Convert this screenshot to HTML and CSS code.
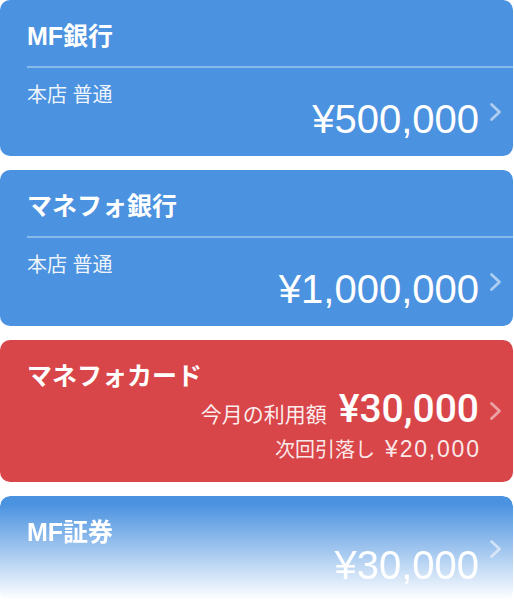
FILE: index.html
```html
<!DOCTYPE html>
<html lang="ja">
<head>
<meta charset="utf-8">
<title>口座一覧</title>
<link rel="stylesheet" href="styles.css">
</head>
<body>
<div class="list">
  <div class="card bank">
    <div class="head"><span class="title">MF銀行</span></div>
    <div class="body">
      <div class="sub">本店 普通</div>
      <div class="amount-row">
        <span class="amount">¥500,000</span>
        <svg class="chev" viewBox="0 0 13 20" width="13" height="20"><path d="M2.5 2.5 L10.5 10 L2.5 17.5"/></svg>
      </div>
    </div>
  </div>

  <div class="card bank">
    <div class="head"><span class="title">マネフォ銀行</span></div>
    <div class="body">
      <div class="sub">本店 普通</div>
      <div class="amount-row">
        <span class="amount">¥1,000,000</span>
        <svg class="chev" viewBox="0 0 13 20" width="13" height="20"><path d="M2.5 2.5 L10.5 10 L2.5 17.5"/></svg>
      </div>
    </div>
  </div>

  <div class="card credit">
    <div class="title-plain"><span class="title">マネフォカード</span></div>
    <div class="usage-row">
      <span class="usage-label">今月の利用額</span>
      <span class="usage-amount">¥30,000</span>
      <svg class="chev chev-red" viewBox="0 0 13 20" width="13" height="20"><path d="M2.5 2.5 L10.5 10 L2.5 17.5"/></svg>
    </div>
    <div class="due"><span class="due-label">次回引落し</span><span class="due-amount">¥20,000</span></div>
  </div>

  <div class="card sec">
    <div class="sec-main">
      <span class="title">MF証券</span>
      <span class="amount sec-amount">¥30,000</span>
    </div>
    <svg class="chev" viewBox="0 0 13 20" width="13" height="20"><path d="M2.5 2.5 L10.5 10 L2.5 17.5"/></svg>
  </div>
</div>
</body>
</html>
```

FILE: styles.css
```css
html, body {
  overflow: hidden;
}
body {
  margin: 0;
  background: #ffffff;
  font-family: "Liberation Sans", "Noto Sans CJK JP", sans-serif;
  color: #ffffff;
}
.list {
  display: flex;
  flex-direction: column;
  gap: 14px;
  padding-right: 1px;
}
.card {
  border-radius: 10px;
  padding-left: 27px;
  background: #4b92e0;
}
.card.credit {
  background: #d9464a;
  padding-right: 11px;
  padding-bottom: 20px;
}
.head {
  padding: 21px 0 15px;
  border-bottom: 2px solid rgba(255, 255, 255, 0.35);
}
.title {
  display: block;
  font-size: 25px;
  line-height: 30px;
  font-weight: bold;
}
.body {
  padding: 13px 11px 17px 0;
}
.sub {
  font-size: 20px;
  line-height: 28px;
  color: rgba(255, 255, 255, 0.92);
}
.amount-row {
  display: flex;
  justify-content: flex-end;
  align-items: flex-start;
  gap: 10px;
  margin-top: -10px;
}
.amount {
  font-size: 40px;
  line-height: 40px;
}
.chev {
  flex: none;
  fill: none;
  stroke: rgba(255, 255, 255, 0.55);
  stroke-width: 2.8;
  stroke-linecap: round;
  stroke-linejoin: round;
}
.amount-row .chev {
  margin-top: 3px;
}
.title-plain {
  padding-top: 21px;
}
.usage-row {
  display: flex;
  justify-content: flex-end;
  align-items: baseline;
  height: 38px;
  margin-top: -1px;
}
.usage-label {
  font-size: 21px;
  line-height: 38px;
  color: rgba(255, 255, 255, 0.92);
  margin-right: 12px;
}
.usage-amount {
  font-family: Roboto, "Liberation Sans", sans-serif;
  font-size: 39px;
  line-height: 38px;
  font-weight: 500;
}
.usage-row .chev {
  align-self: center;
  margin-left: 10px;
  margin-top: 4px;
}
.chev-red {
  stroke: rgba(255, 255, 255, 0.5);
}
.due {
  display: flex;
  justify-content: flex-end;
  align-items: baseline;
  height: 26px;
  margin-top: 8px;
  margin-right: 23px;
  line-height: 26px;
  color: rgba(255, 255, 255, 0.9);
}
.due-label {
  font-size: 20px;
}
.due-amount {
  font-size: 23px;
  letter-spacing: 1.8px;
  margin-left: 10px;
  margin-right: -1.8px;
}
.card.sec {
  display: grid;
  grid-template-columns: 1fr auto;
  align-items: center;
  column-gap: 10px;
  padding: 21px 11px 17px 27px;
  -webkit-mask-image: linear-gradient(to bottom, #000 8px, transparent 104px);
  mask-image: linear-gradient(to bottom, #000 8px, transparent 104px);
}
.sec-main {
  display: flex;
  flex-direction: column;
}
.sec-amount {
  align-self: flex-end;
  margin-top: -2px;
}
.card.sec .chev {
  margin-top: -21px;
  margin-bottom: -17px;
}
```
